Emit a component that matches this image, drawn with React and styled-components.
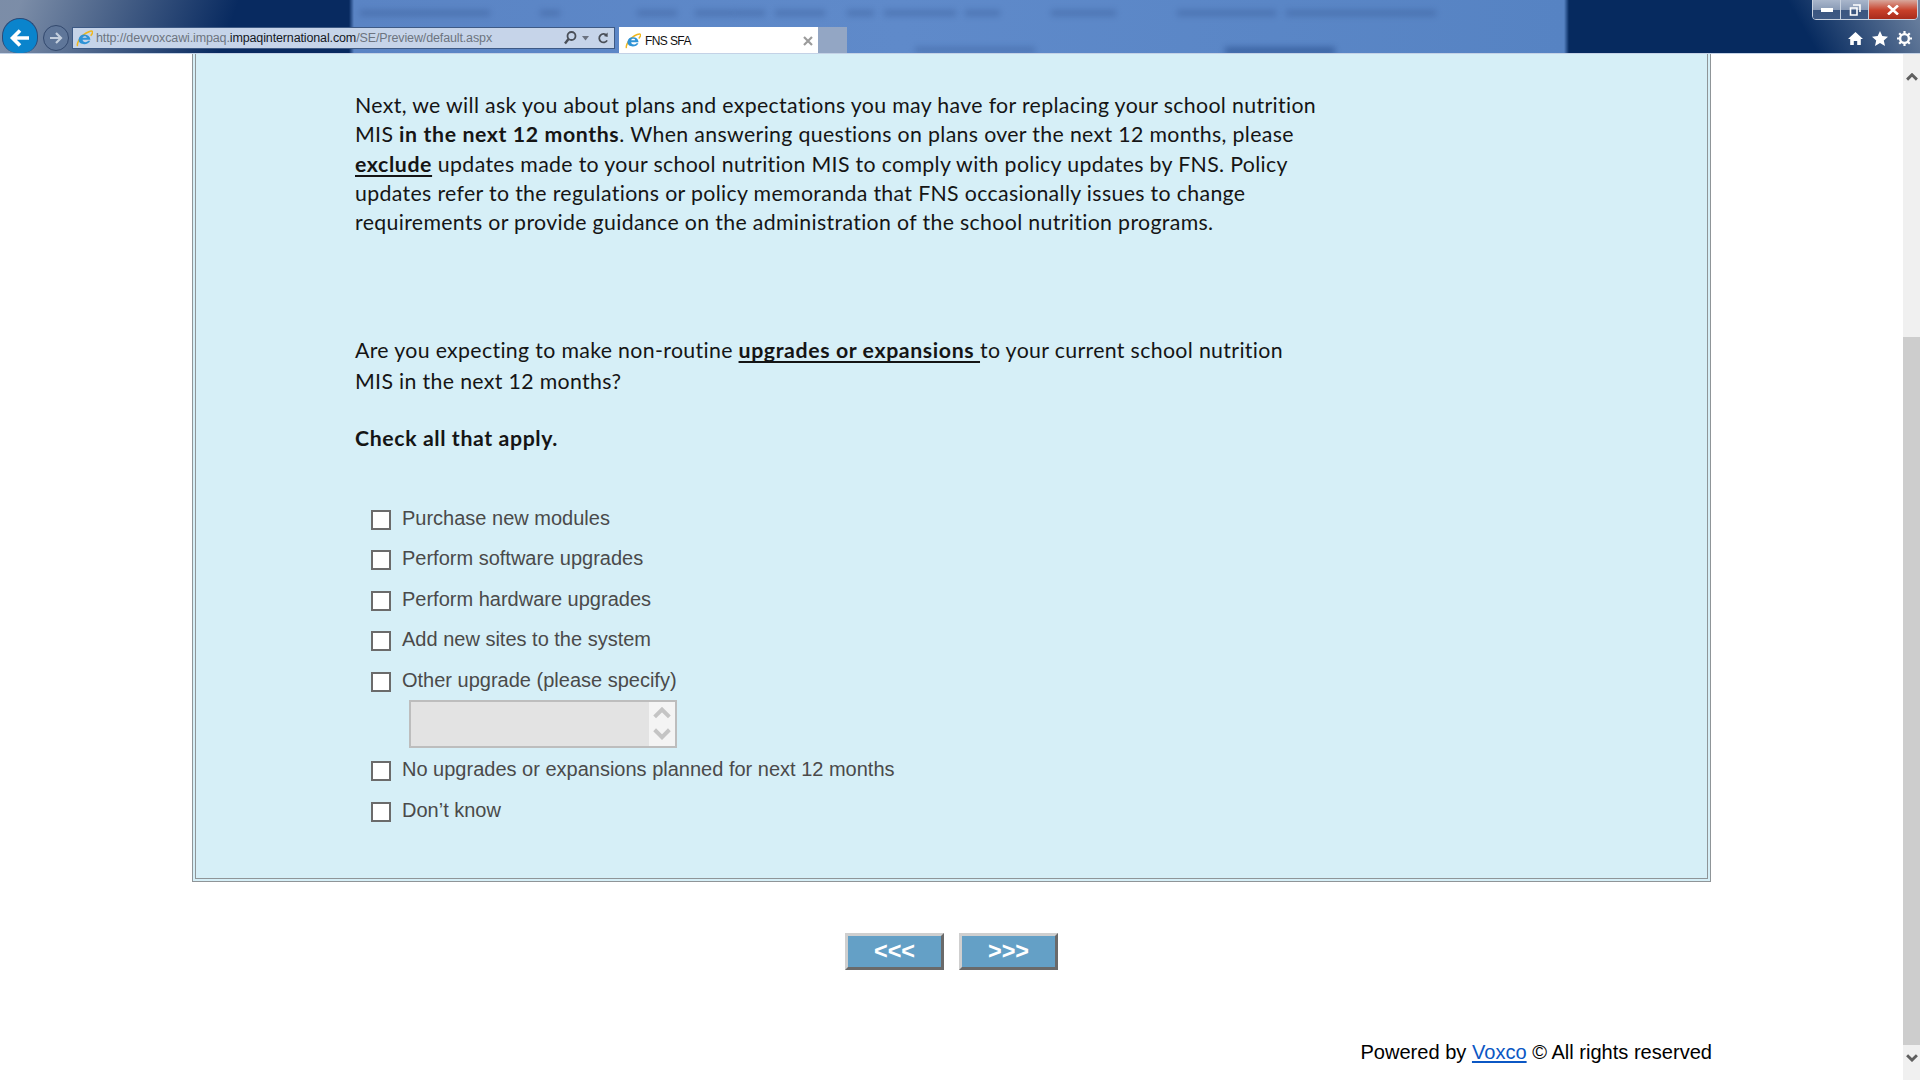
import styled, { createGlobalStyle } from "styled-components";

const GlobalStyle = createGlobalStyle`
  html, body {
    margin: 0;
    padding: 0;
    height: 100%;
    overflow: hidden;
    background: #fff;
  }
`;

const Screen = styled.div`
  display: flex;
  flex-direction: column;
  height: 1080px;
  width: 1920px;
  overflow: hidden;
`;

const BrowserBar = styled.header`
  position: relative;
  display: flex;
  align-items: flex-end;
  height: 54px;
  padding: 0 0 0 2px;
  box-sizing: border-box;
  flex-shrink: 0;
  overflow: hidden;
  border-bottom: 1px solid #c4d2e6;
  background:
    linear-gradient(60deg, transparent calc(100% - 115px), rgba(118, 138, 166, 0.95) 100%),
    linear-gradient(290deg, transparent calc(100% - 225px), rgba(126, 143, 169, 0.98) calc(100% - 20px)),
    linear-gradient(90deg, #082a60 0, #082a60 349px, #5a84c4 354px, #5f8aca 900px, #5683c3 1564px, #062a5f 1569px, #062a5f 100%);
`;

const Smudge = styled.span`
  position: absolute;
  top: ${(p) => p.$top}px;
  left: ${(p) => p.$left}px;
  width: ${(p) => p.$w}px;
  height: ${(p) => p.$h || 6}px;
  background: ${(p) => p.$color || "#33548f"};
  opacity: 0.38;
  filter: blur(3px);
`;

const BackButton = styled.div`
  position: relative;
  display: flex;
  align-items: center;
  justify-content: center;
  flex-shrink: 0;
  width: 36px;
  height: 35px;
  padding-top: 3px;
  border-radius: 18px 18px 15px 15px;
  background: #0a84cc;
  border: 1px solid #2a4a78;
  border-bottom: none;
  box-sizing: border-box;
`;

const ForwardButton = styled.div`
  position: relative;
  display: flex;
  align-items: center;
  justify-content: center;
  flex-shrink: 0;
  width: 26px;
  height: 26px;
  margin: 0 3px 2px 5px;
  border-radius: 50%;
  background: #5f7699;
  border: 1px solid #33496e;
  box-sizing: border-box;
`;

const AddressBar = styled.div`
  position: relative;
  display: flex;
  align-items: center;
  flex-shrink: 0;
  width: 543px;
  height: 22px;
  margin-bottom: 4px;
  padding: 0 5px 0 3px;
  box-sizing: border-box;
  background: #c6d4e9;
  border: 1px solid #3e5a85;
  font: 12.5px "Liberation Sans", Arial, sans-serif;
  letter-spacing: -0.13px;
  color: #6d7480;
`;

const UrlText = styled.span`
  margin-left: 3px;
  flex: 1;
  white-space: nowrap;
`;

const UrlHost = styled.span`
  color: #14181f;
`;

const AddressTools = styled.div`
  display: flex;
  align-items: center;
  color: #4a4f58;
`;

const Tab = styled.div`
  position: relative;
  display: flex;
  align-items: center;
  flex-shrink: 0;
  width: 199px;
  height: 26px;
  margin-left: 4px;
  padding: 1px 5px 0 6px;
  box-sizing: border-box;
  background: #fff;
  font: 12px "Liberation Sans", Arial, sans-serif;
  letter-spacing: -0.6px;
  color: #111;
`;

const TabTitle = styled.span`
  flex: 1;
  margin-left: 4px;
`;

const NewTab = styled.div`
  position: relative;
  flex-shrink: 0;
  width: 29px;
  height: 26px;
  background: #93a6c4;
`;

const RightTools = styled.div`
  position: relative;
  display: flex;
  align-items: center;
  gap: 9px;
  margin-left: auto;
  margin-right: 8px;
  margin-bottom: 7px;
`;

const WindowControls = styled.div`
  position: absolute;
  top: -1px;
  right: 2px;
  display: flex;
  height: 19px;
  border: 1px solid #c8d2e0;
  border-radius: 0 0 4px 4px;
  overflow: hidden;
`;

const WinButton = styled.div`
  display: flex;
  align-items: center;
  justify-content: center;
  width: ${(p) => (p.$close ? 48 : 27)}px;
  background: ${(p) =>
    p.$close
      ? "linear-gradient(#d8a79c 0, #c8402a 55%, #a82c1c 100%)"
      : "linear-gradient(#a9b6cb 0, #8a9bb6 50%, #3b5680 55%, #3f5a84 100%)"};
  border-left: ${(p) => (p.$first ? "none" : "1px solid #c8d2e0")};
`;

const Body = styled.div`
  display: flex;
  flex: 1;
  min-height: 0;
`;

const Page = styled.main`
  flex: 1;
  display: flex;
  flex-direction: column;
  padding-left: 192px;
`;

const Panel = styled.section`
  width: 1519px;
  height: 828px;
  box-sizing: border-box;
  padding: 37px 0 0 159px;
  background: #d6eff7;
  border-style: double;
  border-color: #8f9598;
  border-width: 0 4px 4px 4px;
`;

const Intro = styled.p`
  margin: 0;
  width: 966px;
  font: 21.3px/29.3px "Lato", sans-serif;
  letter-spacing: 0.34px;
  color: #151515;
`;

const Question = styled(Intro)`
  margin-top: 98px;
  line-height: 30.5px;
`;

const CheckAll = styled(Intro)`
  margin-top: 28px;
  font-weight: bold;
  letter-spacing: 0.6px;
`;

const Strong = styled.strong`
  font-weight: bold;
  letter-spacing: 0.6px;
`;

const StrongLine = styled(Strong)`
  text-decoration: underline;
  text-decoration-thickness: 2px;
  text-underline-offset: 3px;
`;

const Options = styled.div`
  display: flex;
  flex-direction: column;
  margin: 44.4px 0 0 16px;
`;

const OptionRow = styled.label`
  display: flex;
  align-items: center;
  gap: 11px;
  height: 40.5px;
  font: 20px "Liberation Sans", Arial, sans-serif;
  color: #4a4a4a;
`;

const CheckBox = styled.span`
  display: block;
  width: 20px;
  height: 20px;
  margin-top: 3px;
  box-sizing: border-box;
  background: #fff;
  border: 2px solid #6b6b6b;
`;

const SpecifyBox = styled.div`
  display: flex;
  justify-content: flex-end;
  width: 268px;
  height: 48px;
  margin: -1px 0 2px 38px;
  box-sizing: border-box;
  background: #e3e3e3;
  border: 2px solid #bdbdbd;
`;

const SpecifySpin = styled.div`
  display: flex;
  flex-direction: column;
  align-items: center;
  justify-content: center;
  gap: 9px;
  width: 26px;
  background: #f4f4f4;
`;

const Nav = styled.div`
  display: flex;
  justify-content: center;
  gap: 15px;
  margin-top: 51px;
  width: 1519px;
`;

const NavButton = styled.button`
  width: 99px;
  height: 37px;
  padding: 0;
  box-sizing: border-box;
  background: #64a0c6;
  border-style: solid;
  border-width: 3px;
  border-color: #cfcfcf #6a6a6a #6a6a6a #cfcfcf;
  font: bold 23.5px "Liberation Sans", Arial, sans-serif;
  color: #fff;
`;

const Footer = styled.footer`
  margin-top: 71px;
  width: 1520px;
  text-align: right;
  font: 20.07px "Liberation Sans", Arial, sans-serif;
  color: #000;
`;

const FooterLink = styled.a`
  color: #0b57c4;
  text-decoration: underline;
`;

const Scrollbar = styled.aside`
  position: relative;
  display: flex;
  flex-direction: column;
  align-items: center;
  justify-content: space-between;
  width: 17px;
  padding: 19px 0 18px;
  box-sizing: border-box;
  background: #f0f0f0;
`;

const ScrollThumb = styled.div`
  position: absolute;
  top: 283px;
  left: 0;
  right: 0;
  height: 708px;
  background: #cdcdcd;
`;

const ScrollArrow = styled.div`
  position: relative;
  display: flex;
`;

const IeLogo = ({ size = 17 }) => (
  <svg width={size} height={size} viewBox="0 0 16 16">
    <path d="M1.6 15C.4 13.6 3 7.5 7 4.5 10.5 1.8 14.6.4 15.4 1.4c.6.9-.5 2.8-1.6 4" fill="none" stroke="#f0b71d" strokeWidth="1.5" />
    <path d="M2.4 8.8a5.7 5.7 0 0 1 11.2.4H6.2c.1 2.6 3.8 3 5.4 1h1.8c-2 4.8-11.3 4.2-11-1.4zM6.2 7.3h4C10 5.4 6.6 5.3 6.2 7.3z" fill="#2f93d6" />
  </svg>
);

const BackArrow = () => (
  <svg width="22" height="22" viewBox="0 0 22 22">
    <path d="M11 3.5 3.5 11l7.5 7.5M4 11h16" fill="none" stroke="#fff" strokeWidth="3.6" />
  </svg>
);

const ForwardArrow = () => (
  <svg width="16" height="16" viewBox="0 0 16 16">
    <path d="M8 3l5 5-5 5M13 8H2" fill="none" stroke="#c3cedd" strokeWidth="2.2" />
  </svg>
);

const SearchIcon = () => (
  <svg width="14" height="16" viewBox="0 0 14 16">
    <circle cx="8.5" cy="6" r="4" fill="none" stroke="#4a4f58" strokeWidth="1.8" />
    <path d="M5.5 9 2 13.5" stroke="#4a4f58" strokeWidth="2.4" />
  </svg>
);

const CaretIcon = styled.svg`
  margin: 0 8px 0 5px;
`;

const Caret = () => (
  <CaretIcon width="7" height="5" viewBox="0 0 7 5">
    <path d="M0 0h7L3.5 4.5z" fill="#6b7280" />
  </CaretIcon>
);

const RefreshIcon = () => (
  <svg width="12" height="15" viewBox="0 0 13 15">
    <path d="M10.5 4.2A4.6 4.6 0 1 0 11 9.5" fill="none" stroke="#4a4f58" strokeWidth="1.9" />
    <path d="M7.5 4.7 11.5 1v5z" fill="#4a4f58" />
  </svg>
);

const CloseIcon = () => (
  <svg width="10" height="10" viewBox="0 0 10 10">
    <path d="M1 1l8 8M9 1 1 9" stroke="#9b9b9b" strokeWidth="2.2" />
  </svg>
);

const HomeIcon = () => (
  <svg width="15" height="15" viewBox="0 0 15 15">
    <path d="M7.5 1 0 8h2.2v6h3.6v-4h3.4v4h3.6V8H15z" fill="#fff" />
  </svg>
);

const StarIcon = () => (
  <svg width="16" height="15" viewBox="0 0 16 15">
    <path d="M8 0l2.3 5.1 5.7.6-4.2 3.7 1.2 5.6L8 12l-5 3 1.2-5.6L0 5.7l5.7-.6z" fill="#fff" />
  </svg>
);

const GearIcon = () => (
  <svg width="15" height="15" viewBox="0 0 15 15">
    <circle cx="7.5" cy="7.5" r="4.4" fill="none" stroke="#fff" strokeWidth="2.4" />
    <path d="M7.5 0v3M7.5 12v3M0 7.5h3M12 7.5h3M2.2 2.2l2 2M10.8 10.8l2 2M12.8 2.2l-2 2M4.2 10.8l-2 2" stroke="#fff" strokeWidth="2.2" />
  </svg>
);

const Chevron = ({ up, color = "#5f5f5f", w = 12, sw = 2.6 }) => (
  <svg width={w} height={w * 0.65} viewBox="0 0 11 7">
    <path d={up ? "M1 6l4.5-4.5L10 6" : "M1 1l4.5 4.5L10 1"} fill="none" stroke={color} strokeWidth={sw} />
  </svg>
);

const Option = ({ children }) => (
  <OptionRow>
    <CheckBox />
    {children}
  </OptionRow>
);

const smudges = [
  [360, 130], [540, 20], [637, 40], [695, 40], [735, 30], [775, 50],
  [847, 27], [884, 72], [965, 35], [1051, 65], [1177, 99], [1286, 150],
];

const App = () => {
  return (
    <Screen>
      <GlobalStyle />
      <BrowserBar>
        {smudges.map(([left, w]) => (
          <Smudge key={left} $top={10} $left={left} $w={w} />
        ))}
        <Smudge $top={47} $left={915} $w={120} />
        <Smudge $top={47} $left={1225} $w={110} $h={8} $color="#0d2f6c" />
        <BackButton><BackArrow /></BackButton>
        <ForwardButton><ForwardArrow /></ForwardButton>
        <AddressBar>
          <IeLogo />
          <UrlText>
            http://devvoxcawi.impaq.<UrlHost>impaqinternational.com</UrlHost>/SE/Preview/default.aspx
          </UrlText>
          <AddressTools>
            <SearchIcon />
            <Caret />
            <RefreshIcon />
          </AddressTools>
        </AddressBar>
        <Tab>
          <IeLogo size={16} />
          <TabTitle>FNS SFA</TabTitle>
          <CloseIcon />
        </Tab>
        <NewTab />
        <RightTools>
          <HomeIcon />
          <StarIcon />
          <GearIcon />
        </RightTools>
        <WindowControls>
          <WinButton $first>
            <svg width="12" height="4"><rect width="12" height="4" fill="#fff" /></svg>
          </WinButton>
          <WinButton>
            <svg width="12" height="12" viewBox="0 0 12 12">
              <path d="M4 1h7v7M1.5 4h6.5v7H1.5z" fill="none" stroke="#fff" strokeWidth="1.6" />
            </svg>
          </WinButton>
          <WinButton $close>
            <svg width="12" height="10" viewBox="0 0 12 10">
              <path d="M1 0.5l10 9M11 0.5l-10 9" stroke="#fff" strokeWidth="2.6" />
            </svg>
          </WinButton>
        </WindowControls>
      </BrowserBar>
      <Body>
        <Page>
          <Panel>
            <Intro>
              Next, we will ask you about plans and expectations you may have for replacing your school nutrition
              MIS <Strong>in the next 12 months</Strong>. When answering questions on plans over the next 12 months, please{" "}
              <StrongLine>exclude</StrongLine> updates made to your school nutrition MIS to comply with policy updates by FNS. Policy
              updates refer to the regulations or policy memoranda that FNS occasionally issues to change
              requirements or provide guidance on the administration of the school nutrition programs.
            </Intro>
            <Question>
              Are you expecting to make non-routine <StrongLine>upgrades or expansions </StrongLine>to your current school nutrition
              MIS in the next 12 months?
            </Question>
            <CheckAll>Check all that apply.</CheckAll>
            <Options>
              <Option>Purchase new modules</Option>
              <Option>Perform software upgrades</Option>
              <Option>Perform hardware upgrades</Option>
              <Option>Add new sites to the system</Option>
              <Option>Other upgrade (please specify)</Option>
              <SpecifyBox>
                <SpecifySpin>
                  <Chevron up color="#c4c4c4" w={18} sw={2.4} />
                  <Chevron color="#c4c4c4" w={18} sw={2.4} />
                </SpecifySpin>
              </SpecifyBox>
              <Option>No upgrades or expansions planned for next 12 months</Option>
              <Option>Don’t know</Option>
            </Options>
          </Panel>
          <Nav>
            <NavButton>&lt;&lt;&lt;</NavButton>
            <NavButton>&gt;&gt;&gt;</NavButton>
          </Nav>
          <Footer>
            Powered by <FooterLink href="#">Voxco</FooterLink> © All rights reserved
          </Footer>
        </Page>
        <Scrollbar>
          <ScrollThumb />
          <ScrollArrow><Chevron up /></ScrollArrow>
          <ScrollArrow><Chevron /></ScrollArrow>
        </Scrollbar>
      </Body>
    </Screen>
  );
};

export default App;
